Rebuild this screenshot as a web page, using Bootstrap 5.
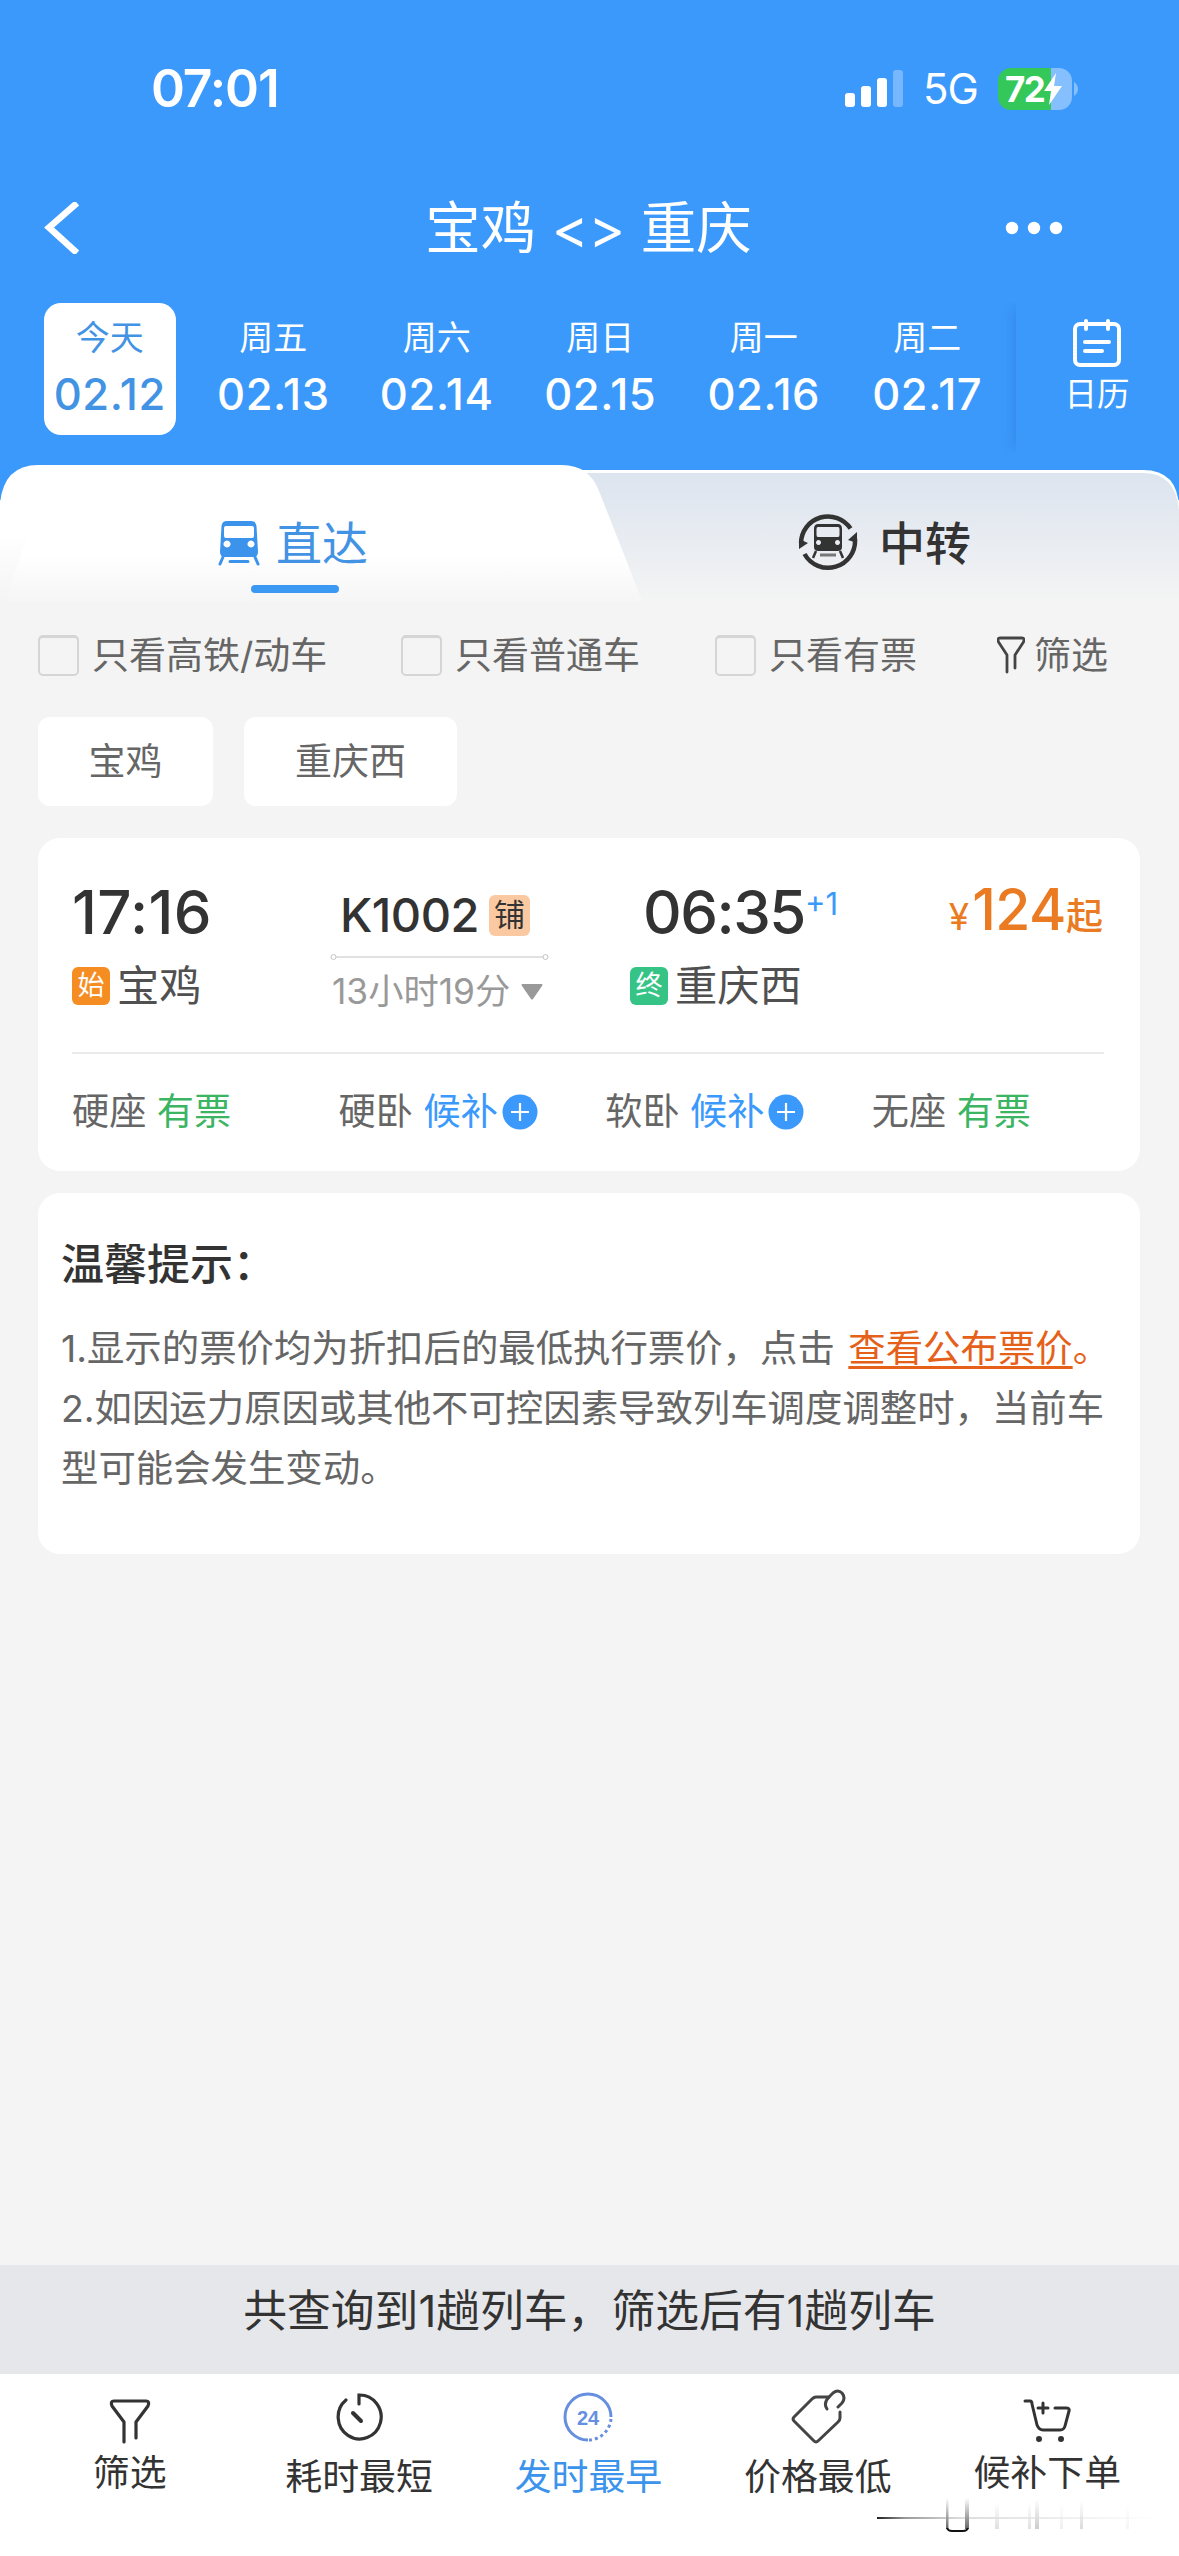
<!DOCTYPE html>
<html lang="zh-CN">
<head>
<meta charset="utf-8">
<meta name="viewport" content="width=device-width, initial-scale=1">
<title>宝鸡 - 重庆</title>
<link href="https://cdn.jsdelivr.net/npm/bootstrap@5.3.0/dist/css/bootstrap.min.css" rel="stylesheet">
<style>
body{font-family:Inter,"Noto Sans CJK SC",sans-serif;background:#f4f4f4;color:#333;width:1179px;height:2556px;overflow:hidden;line-height:1}
svg{display:block;flex:none}
.top-area{background:#3b99fc;height:500px;color:#fff}
.status-row{height:176px;padding:2px 101px 0 151px}
.clock-txt{font-size:51.5px;font-weight:600;letter-spacing:-1.1px}
.net-txt{font-size:42px;font-weight:400;width:59px;letter-spacing:-1px;margin-left:18px}
.batt{width:74px;height:42px;border-radius:13px;background:linear-gradient(90deg,#34c759 72%,#86bffd 72%);font-size:35px;font-weight:700;letter-spacing:-1.5px;padding-left:7px}
.title-row{height:104px;padding:0 116px 0 44px}
.title-txt{font-size:55.5px;line-height:104px;margin-left:92px}
.days-row{padding:23px 0 0 28px}
.day-item{width:163.5px;height:132px;flex:none}
.day-box{width:132px;height:132px;border-radius:17px}
.day-item.sel .day-box{background:#fff;color:#4393e4}
.wk{font-size:34px;line-height:34px;margin-top:18px}
.dt{font-size:43.5px;font-weight:500;line-height:44px;margin-top:17px;letter-spacing:.6px}
.cal-item{width:162px;height:150px;flex:none;box-shadow:-7px 0 12px -6px rgba(30,90,170,.28);clip-path:inset(0 0 0 -22px);margin-left:7px}
.cal-txt{font-size:32.5px;margin-top:10px}
.tabs-row{height:132px;margin-top:-35px;position:relative}
.tabs-bg{position:absolute;left:0;top:0}
.tab-a,.tab-b{position:relative;font-size:46px;line-height:50px;height:132px;padding-top:53px}
.tab-a{width:590px;padding-left:218px;color:#4393e4}
.tab-b{width:589px;padding-left:208px;color:#333;font-weight:500}
.tab-b svg{margin-top:-7px}
.tab-b span{margin-left:21px}
.tab-line{width:88px;height:8px;border-radius:4px;background:#3b99f3;margin:17px 0 0 33px}
.filter-row{height:44px;margin-top:36px;padding-left:38px;font-size:37px;color:#666}
.chk{width:41px;height:41px;border:2px solid #d5d5d5;border-top-width:3px;border-radius:5px;margin-right:13px}
.chip{height:89px;border-radius:12px;background:#fff;font-size:37px;line-height:89px;color:#666;text-align:center}
.train-card{margin:32px 39px 0 38px;height:333px;border-radius:22px;background:#fff;padding:0 36px 0 34px}
.time-txt{font-size:60px;font-weight:500;line-height:60px;letter-spacing:-1.5px}
.no-txt{font-size:47px;font-weight:500;line-height:50px;letter-spacing:-.5px}
.pu{width:41px;height:41px;border-radius:6px;background:#fbc9a1;font-size:31px;line-height:40px;text-align:center}
.tagx{width:38px;height:38px;border-radius:6px;color:#fff;font-size:27px;line-height:38px;text-align:center}
.stn{font-size:42.3px;color:#505050;line-height:42px;margin-left:7px}
.dur{font-size:35.3px;color:#999;line-height:36px}
.seat-row{height:118px;font-size:37.2px;color:#666;border-top:2px solid #ebebeb}
.seat-row>div{width:266.6px;flex:none}
.ok{color:#3cb563}.hb{color:#3b99fc}
.tip-card{margin:22px 39px 0 38px;height:361px;border-radius:22px;background:#fff;padding:49px 20px 0 23px}
.tip-h{font-size:43px;font-weight:500;line-height:44px}
.tip-p{font-size:37.4px;line-height:60px;color:#666;margin-top:33px;white-space:nowrap}
.tip-p a{color:#e5611a;text-decoration:underline;text-underline-offset:4px;text-decoration-thickness:3px;margin-left:3px}
.sum-bar{height:109px;background:#e6e7eb;font-size:43.8px;line-height:94px;text-align:center}
.foot{height:182px;background:#fff;position:relative;padding-left:15px}
.foot-item{width:229.4px;font-size:36.9px;color:#333}
.lab{line-height:40px;margin-top:14px}
.ghost{position:absolute;left:870px;top:124px}
</style>
<script src="https://cdn.jsdelivr.net/npm/bootstrap@5.3.0/dist/js/bootstrap.bundle.min.js"></script>
</head>
<body class="d-flex flex-column">
<header class="top-area flex-shrink-0">
  <div class="status-row d-flex align-items-center justify-content-between">
    <div class="clock-txt">07:01</div>
    <div class="d-flex align-items-center">
      <svg width="60" height="38" viewBox="0 0 60 38" fill="#fff"><rect x="0" y="23" width="10" height="14" rx="3"/><rect x="16" y="16" width="10" height="21" rx="3"/><rect x="32" y="8" width="10" height="29" rx="3"/><rect x="48" y="0" width="10" height="37" rx="3" opacity=".3"/></svg>
      <span class="net-txt">5G</span>
      <div class="batt d-flex align-items-center ms-3"><span>72</span><svg width="18" height="32" viewBox="0 0 18 32" fill="#fff"><path d="M12 0 0 18h7L5 32 18 13h-8z"/></svg></div>
      <svg width="6" height="16" viewBox="0 0 6 16"><path d="M2 1q4 3 4 7t-4 7z" fill="#86bffd"/></svg>
    </div>
  </div>
  <div class="title-row d-flex align-items-center justify-content-between">
    <svg width="36" height="52" viewBox="0 0 36 52" fill="none" stroke="#fff" stroke-width="6.500"><path d="M33 1 5 25.500 33 51"/></svg>
    <div class="title-txt">宝鸡 &lt;&gt; 重庆</div>
    <svg width="58" height="14" viewBox="0 0 58 14" fill="#fff"><circle cx="7" cy="7" r="6.200"/><circle cx="29" cy="7" r="6.200"/><circle cx="51" cy="7" r="6.200"/></svg>
  </div>
  <div class="days-row d-flex">
    <div class="day-item sel d-flex justify-content-center"><div class="day-box text-center"><div class="wk">今天</div><div class="dt">02.12</div></div></div>
    <div class="day-item d-flex justify-content-center"><div class="day-box text-center"><div class="wk">周五</div><div class="dt">02.13</div></div></div>
    <div class="day-item d-flex justify-content-center"><div class="day-box text-center"><div class="wk">周六</div><div class="dt">02.14</div></div></div>
    <div class="day-item d-flex justify-content-center"><div class="day-box text-center"><div class="wk">周日</div><div class="dt">02.15</div></div></div>
    <div class="day-item d-flex justify-content-center"><div class="day-box text-center"><div class="wk">周一</div><div class="dt">02.16</div></div></div>
    <div class="day-item d-flex justify-content-center"><div class="day-box text-center"><div class="wk">周二</div><div class="dt">02.17</div></div></div>
    <div class="cal-item d-flex flex-column align-items-center">
      <svg class="mt-3" width="50" height="50" viewBox="0 0 50 50" fill="none" stroke="#fff" stroke-width="4" stroke-linecap="round"><rect x="3" y="5" width="44" height="41" rx="5"/><path d="M14 2v8M36 2v8M13 23h24M13 32h17"/></svg>
      <div class="cal-txt">日历</div>
    </div>
  </div>
</header>
<nav class="tabs-row d-flex flex-shrink-0">
  <svg class="tabs-bg" width="1179" height="138" viewBox="0 0 1179 138">
    <defs>
      <linearGradient id="ga" x1="0" y1="0" x2="0" y2="1"><stop offset="0" stop-color="#fff"/><stop offset=".5" stop-color="#fff"/><stop offset="1" stop-color="#f4f4f4"/></linearGradient>
      <linearGradient id="gb" x1="0" y1="0" x2="0" y2="1"><stop offset="0" stop-color="#dce4ef"/><stop offset="1" stop-color="#f4f4f4"/></linearGradient>
      <linearGradient id="gc" x1="0" y1="0" x2="0" y2="1"><stop offset="0" stop-color="#fff"/><stop offset=".65" stop-color="#fff"/><stop offset="1" stop-color="#f5f5f5"/></linearGradient>
    </defs>
    <path d="M500 5H1143q35 0 36 38v95H500z" fill="#fff"/>
    <path d="M500 8H1143q33 0 36 38v92H500z" fill="url(#gb)"/>
    <path d="M0 38Q4 0 38 0H300V138H0z" fill="url(#ga)"/>
    <path d="M34 50Q40 0 70 0H562q27 0 37 26L643 138H5z" fill="url(#gc)"/>
  </svg>
  <div class="tab-a">
    <div class="d-flex align-items-center">
      <svg width="42" height="46" viewBox="0 0 42 46"><path fill="#3b93ec" fill-rule="evenodd" d="M9 1h24q5 0 5.500 5L40 32q0 5-5 5H7q-5 0-5-5L3.500 6Q4 1 9 1zM8 6Q6 6 6 8V16Q6 18 8 18H34q2 0 2-2V8Q36 6 34 6zM9 20.500a3.500 3.500 0 1 0 .01 0zM33 20.500a3.500 3.500 0 1 0 .01 0z"/><path d="M5 37 2 44M37 37l3 7M12 41.500h18" stroke="#3b93ec" stroke-width="3" stroke-linecap="round"/></svg>
      <span class="ms-3">直达</span>
    </div>
    <div class="tab-line"></div>
  </div>
  <div class="tab-b d-flex align-items-start">
    <svg width="60" height="60" viewBox="0 0 60 60"><path d="M3 32A27 27 0 0 1 52.500 17.500M57 28A27 27 0 0 1 6.500 43" fill="none" stroke="#333" stroke-width="4.500"/><path d="M1 38V28l9 4zM59 21V32l-9-3z" fill="#333"/><path fill="#333" fill-rule="evenodd" d="M20 13h20q3.500 0 4 4v19q0 4-4 4H20q-4 0-4-4V17q.5-4 4-4zM20 16q-1.500 0-1.500 2v6q0 2 1.500 2H40q1.500 0 1.500-2V18q0-2-1.500-2zM20.500 29a2.500 2.500 0 1 0 .01 0zM39.500 29a2.500 2.500 0 1 0 .01 0z"/><path d="M18 40l-3 7M42 40l3 7" stroke="#333" stroke-width="2.500"/><path d="M22 44h16" stroke="#777" stroke-width="3"/></svg>
    <span>中转</span>
  </div>
</nav>
<div class="filter-row d-flex align-items-center flex-shrink-0">
  <div class="d-flex align-items-center" style="width:363px"><i class="chk"></i>只看高铁/动车</div>
  <div class="d-flex align-items-center" style="width:314px"><i class="chk"></i>只看普通车</div>
  <div class="d-flex align-items-center" style="width:282px"><i class="chk"></i>只看有票</div>
  <svg width="28" height="38" viewBox="0 0 28 38" fill="none" stroke="#444" stroke-width="2.800" stroke-linecap="round" stroke-linejoin="round"><path d="M10 36V19L1.500 6Q0 2 3 2H25q3 0 1.500 4L18 19V32"/></svg>
  <span style="margin-left:9px">筛选</span>
</div>
<div class="d-flex flex-shrink-0" style="padding:40px 0 0 38px;gap:31px">
  <div class="chip" style="width:175px">宝鸡</div><div class="chip" style="width:213px">重庆西</div>
</div>
<section class="train-card flex-shrink-0">
  <div class="d-flex" style="height:214px">
    <div style="width:258px;padding-top:44px">
      <div class="time-txt" style="letter-spacing:.4px">17:16</div>
      <div class="d-flex align-items-center" style="margin-top:23px"><span class="tagx" style="background:#f68d22">始</span><span class="stn">宝鸡</span></div>
    </div>
    <div style="width:300px;padding-top:52px">
      <div class="d-flex align-items-center" style="padding-left:10px"><span class="no-txt">K1002</span><span class="pu" style="margin-left:10px">铺</span></div>
      <svg width="219" height="10" viewBox="0 0 219 10" fill="none" stroke="#c4c4c4" style="margin-top:12px"><path d="M6 5H213"/><circle cx="3.500" cy="5" r="2.500"/><circle cx="215.500" cy="5" r="2.500"/></svg>
      <div class="d-flex align-items-center" style="margin-top:12px;padding-left:2px"><span class="dur">13小时19分</span><svg width="22" height="16" viewBox="0 0 22 16" style="margin-left:11px"><path d="M1 0H21Q22 1 21 2L12 15q-1 1-2 0L1 2Q0 1 1 0z" fill="#999"/></svg></div>
    </div>
    <div style="width:300px;padding-top:44px">
      <div class="d-flex"><span class="time-txt" style="margin-left:13px">06:35</span><span class="hb" style="font-size:31px;line-height:44px">+1</span></div>
      <div class="d-flex align-items-center" style="margin-top:23px"><span class="tagx" style="background:#36c486">终</span><span class="stn">重庆西</span></div>
    </div>
    <div class="d-flex align-items-baseline justify-content-end" style="width:173px;padding-top:42px;color:#ea7b23;font-weight:500;line-height:60px"><span style="font-size:37px;font-weight:400;margin-right:3px">¥</span><span style="font-size:57px;letter-spacing:-.5px;font-weight:500">124</span><span style="font-size:37px">起</span></div>
  </div>
  <div class="seat-row d-flex align-items-center">
    <div>硬座 <span class="ok">有票</span></div>
    <div class="d-flex align-items-center"><span>硬卧 <span class="hb">候补</span></span><svg width="36" height="36" viewBox="0 0 36 36" style="margin-left:4px"><circle cx="18" cy="18" r="17.500" fill="#3b99fc"/><path d="M9 18h18M18 9v18" stroke="#fff" stroke-width="2.200"/></svg></div>
    <div class="d-flex align-items-center"><span>软卧 <span class="hb">候补</span></span><svg width="36" height="36" viewBox="0 0 36 36" style="margin-left:4px"><circle cx="18" cy="18" r="17.500" fill="#3b99fc"/><path d="M9 18h18M18 9v18" stroke="#fff" stroke-width="2.200"/></svg></div>
    <div>无座 <span class="ok">有票</span></div>
  </div>
</section>
<section class="tip-card flex-shrink-0">
  <div class="tip-h">温馨提示：</div>
  <div class="tip-p">1.显示的票价均为折扣后的最低执行票价，点击 <a href="#">查看公布票价</a><span style="color:#e5611a">。</span><br>2.如因运力原因或其他不可控因素导致列车调度调整时，当前车<br>型可能会发生变动。</div>
</section>
<div class="sum-bar mt-auto flex-shrink-0">共查询到1趟列车，筛选后有1趟列车</div>
<footer class="foot d-flex flex-shrink-0">
  <div class="foot-item d-flex flex-column align-items-center">
    <svg style="margin-top:25px" width="42" height="46" viewBox="0 0 42 46" fill="none" stroke="#333" stroke-width="3.200" stroke-linecap="round" stroke-linejoin="round"><path d="M15 43V23L3 7Q1 2 5 2H37q4 0 2 5L27 23V39"/></svg>
    <div class="lab" style="margin-top:8px">筛选</div></div>
  <div class="foot-item d-flex flex-column align-items-center">
    <svg style="margin-top:17px" width="50" height="52" viewBox="0 0 50 52" fill="none" stroke="#333" stroke-width="3.200" stroke-linecap="round"><path d="M12 9A21.500 22 0 1 0 25 4V13"/><path d="M19 22l8 8" stroke-width="4"/></svg>
    <div class="lab">耗时最短</div></div>
  <div class="foot-item d-flex flex-column align-items-center" style="color:#3b93ec">
    <svg style="margin-top:17px" width="50" height="52" viewBox="0 0 50 52" fill="none" stroke="#668fe0" stroke-width="3"><path d="M25 49A23 23 0 1 1 48 26"/><path d="M48 28A23 23 0 0 1 25 49" stroke-dasharray="3 3"/><text x="25" y="33.500" text-anchor="middle" font-size="20" font-weight="700" fill="#668fe0" stroke="none" font-family="Liberation Sans">24</text></svg>
    <div class="lab">发时最早</div></div>
  <div class="foot-item d-flex flex-column align-items-center">
    <svg style="margin-top:15px" width="56" height="56" viewBox="0 0 56 56" fill="none" stroke="#444" stroke-width="3" stroke-linecap="round" stroke-linejoin="round"><path d="M39 8H26Q24 8 22 10L4 28Q2 30 4 32L24 52Q26 54 28 52L48 33Q50 31 50 29V23"/><path d="M37 20Q33 14 39 8L43 4Q48 0 52 4 56 9 52 14L48 18"/></svg>
    <div class="lab" style="margin-top:12px">价格最低</div></div>
  <div class="foot-item d-flex flex-column align-items-center">
    <svg style="margin-top:25px" width="48" height="46" viewBox="0 0 48 46" fill="none" stroke="#333" stroke-width="3" stroke-linecap="round" stroke-linejoin="round"><path d="M2 2H7Q9 2 9 5L14 26Q16 31 20 31H37Q41 31 42 27L46 12Q47 9 43 9H32M20 4V14M15 9H25"/><circle cx="16" cy="40" r="1.500"/><circle cx="38" cy="40" r="1.500"/></svg>
    <div class="lab" style="margin-top:8px">候补下单</div></div>
  <svg class="ghost" width="300" height="50" viewBox="0 0 300 50">
    <defs><linearGradient id="gl"><stop offset="0" stop-color="#222"/><stop offset=".1" stop-color="#999"/><stop offset=".3" stop-color="#ddd"/><stop offset="1" stop-color="#fff"/></linearGradient>
    <linearGradient id="gv" x1="0" y1="0" x2="0" y2="1"><stop offset="0" stop-color="#fff"/><stop offset="1" stop-color="#666"/></linearGradient>
    <linearGradient id="gw" x1="0" y1="0" x2="0" y2="1"><stop offset="0" stop-color="#fff"/><stop offset="1" stop-color="#ccc"/></linearGradient></defs>
    <path d="M7 19H287V21H7z" fill="url(#gl)"/>
    <rect x="76" y="0" width="2.500" height="31" fill="url(#gv)"/><rect x="95" y="0" width="4" height="31" fill="url(#gv)"/>
    <path d="M77 30q1 3 5 3H93q4 0 5-3" fill="none" stroke="#111" stroke-width="2"/>
    <g fill="url(#gw)"><rect x="125" y="5" width="4" height="26" opacity=".6"/><rect x="158" y="5" width="3" height="26" opacity=".6"/><rect x="165" y="1" width="4" height="30"/><rect x="190" y="5" width="3" height="26" opacity=".3"/><rect x="210" y="3" width="3" height="28" opacity=".7"/><rect x="256" y="5" width="3" height="26" opacity=".2"/></g>
  </svg>
</footer>
</body>
</html>
